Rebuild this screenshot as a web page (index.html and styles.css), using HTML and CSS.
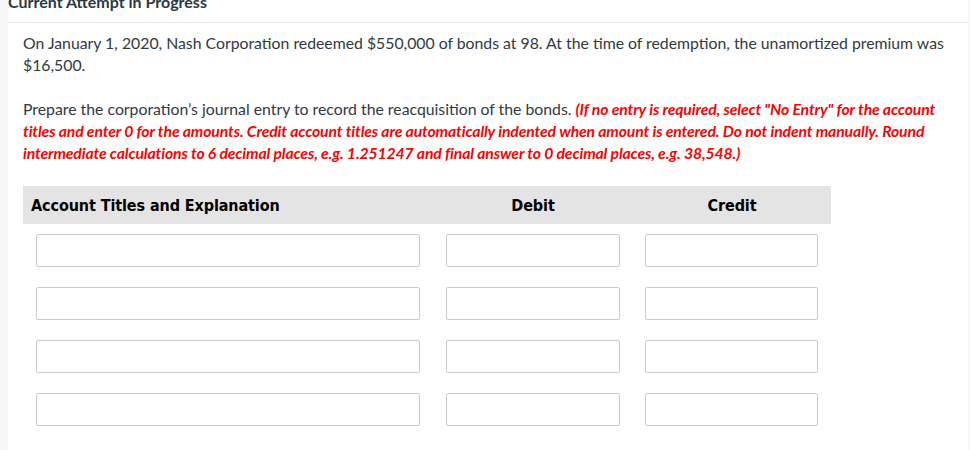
FILE: index.html
```html
<!DOCTYPE html>
<html lang="en">
<head>
<meta charset="utf-8">
<title>Current Attempt in Progress</title>
<link rel="stylesheet" href="styles.css">
</head>
<body>
<div class="page">
  <div class="gutter gutter-left"></div>
  <main class="main">
    <div class="attempt">Current Attempt in Progress</div>
    <div class="content">
      <p class="para">On January 1, 2020, Nash Corporation redeemed $550,000 of bonds at 98. At the time of redemption, the unamortized premium was $16,500.</p>
      <p class="para">Prepare the corporation’s journal entry to record the reacquisition of the bonds. <em class="note">(If no entry is required, select "No Entry" for the account titles and enter 0 for the amounts. Credit account titles are automatically indented when amount is entered. Do not indent manually. Round intermediate calculations to 6 decimal places, e.g. 1.251247 and final answer to 0 decimal places, e.g. 38,548.)</em></p>
      <div class="journal">
        <div class="jhead">
          <div class="hcell hcell-account">Account Titles and Explanation</div>
          <div class="hcell hcell-num">Debit</div>
          <div class="hcell hcell-num">Credit</div>
        </div>
        <div class="jrow">
          <div class="cell"><input class="field" type="text"></div>
          <div class="cell"><input class="field" type="text"></div>
          <div class="cell"><input class="field" type="text"></div>
        </div>
        <div class="jrow">
          <div class="cell"><input class="field" type="text"></div>
          <div class="cell"><input class="field" type="text"></div>
          <div class="cell"><input class="field" type="text"></div>
        </div>
        <div class="jrow">
          <div class="cell"><input class="field" type="text"></div>
          <div class="cell"><input class="field" type="text"></div>
          <div class="cell"><input class="field" type="text"></div>
        </div>
        <div class="jrow">
          <div class="cell"><input class="field" type="text"></div>
          <div class="cell"><input class="field" type="text"></div>
          <div class="cell"><input class="field" type="text"></div>
        </div>
      </div>
    </div>
  </main>
  <div class="gutter gutter-right"></div>
</div>
</body>
</html>
```
FILE: styles.css
```css
html, body {
  margin: 0;
  padding: 0;
  background: #ffffff;
}

body {
  font-family: Lato, "Open Sans", sans-serif;
  color: #2f3a43;
  overflow: hidden;
  height: 450px;
}

.page {
  display: flex;
  min-height: 450px;
}

.gutter {
  background: #f7f7f7;
  flex: none;
}

.gutter-left {
  width: 8px;
}

.gutter-right {
  width: 2px;
}

.main {
  flex: 1;
  min-width: 0;
  background: #ffffff;
}

.attempt {
  margin-top: -7px;
  font-size: 16px;
  line-height: 18px;
  font-weight: 700;
  color: #2d3740;
  padding-bottom: 11px;
  border-bottom: 1px solid #ebebeb;
}

.content {
  padding: 9px 8px 0 15px;
}

.para {
  margin: 0 0 22px 0;
  font-size: 15.8px;
  line-height: 22px;
}

.note {
  color: #ff0000;
  font-weight: 700;
  font-style: italic;
  letter-spacing: -0.15px;
}

.journal {
  width: 808px;
}

.jhead {
  display: grid;
  grid-template-columns: 410px 200px 198px;
  height: 38px;
  align-items: center;
  background: #e4e4e4;
}

.hcell {
  font-family: "DejaVu Sans Condensed", "DejaVu Sans", sans-serif;
  font-stretch: condensed;
  font-weight: 700;
  font-size: 16px;
  letter-spacing: -0.1px;
  color: #000000;
}

.hcell-account {
  padding-left: 8px;
}

.hcell-num {
  text-align: center;
}

.jrow {
  display: grid;
  grid-template-columns: 410px 200px 198px;
}

.cell {
  padding: 10px 13px 10px 13px;
}

.cell:nth-child(3) {
  padding: 10px 13px 10px 12px;
}

.field {
  display: block;
  box-sizing: border-box;
  width: 100%;
  height: 33px;
  margin: 0;
  padding: 0 6px;
  border: 1px solid #cbcbcb;
  border-radius: 2px;
  background: #ffffff;
  font-family: Lato, sans-serif;
  font-size: 15px;
  outline: none;
}
```
